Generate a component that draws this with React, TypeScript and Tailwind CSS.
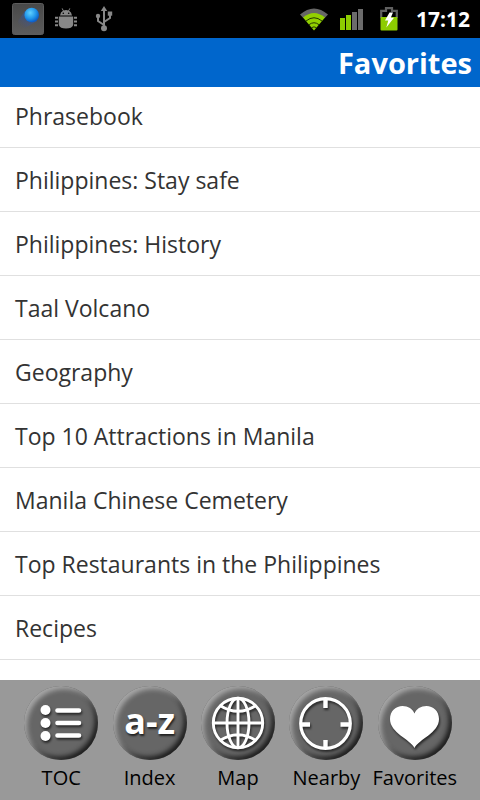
import type { ReactNode } from "react";

const favorites = [
  "Phrasebook",
  "Philippines: Stay safe",
  "Philippines: History",
  "Taal Volcano",
  "Geography",
  "Top 10 Attractions in Manila",
  "Manila Chinese Cemetery",
  "Top Restaurants in the Philippines",
  "Recipes",
];

function AppNotificationIcon() {
  return (
    <svg width="32" height="32" viewBox="0 0 32 32" aria-hidden="true">
      <defs>
        <radialGradient id="ball" cx="0.4" cy="0.35" r="0.65">
          <stop offset="0" stopColor="#5fd0ff" />
          <stop offset="0.6" stopColor="#2196ea" />
          <stop offset="1" stopColor="#0a5cc8" />
        </radialGradient>
        <linearGradient id="trail" x1="1" y1="0" x2="0" y2="1">
          <stop offset="0.3" stopColor="#2a5aa8" stopOpacity="0.8" />
          <stop offset="0.9" stopColor="#4a5080" stopOpacity="0" />
        </linearGradient>
        <linearGradient id="tile" x1="0" y1="0" x2="0" y2="1">
          <stop offset="0" stopColor="#484848" />
          <stop offset="1" stopColor="#5c5c5c" />
        </linearGradient>
      </defs>
      <rect x="0.5" y="0.5" width="31" height="31" rx="2" fill="url(#tile)" stroke="#5c5c5c" />
      <path d="M13 8 L6 18 Q5 26 13 25 L25 18 Z" fill="url(#trail)" />
      <circle cx="19.7" cy="12" r="7.3" fill="url(#ball)" />
    </svg>
  );
}

function DebugIcon() {
  return (
    <svg width="22" height="22" viewBox="0 0 22 22" fill="#888888" aria-hidden="true">
      <path d="M5 7.5 Q5.5 3.8 8 2.8 L6.6 0.6 L7.4 0.2 L8.8 2.4 Q11 1.8 13.2 2.4 L14.6 0.2 L15.4 0.6 L14 2.8 Q16.5 3.8 17 7.5 Z" />
      <path d="M3.8 8.5 H18.2 V17 Q17 20.5 11 20.5 Q5 20.5 3.8 17 Z" />
      <path d="M0 9.8 H3 M0 13.5 H3 M0 17.2 H3 M19 9.8 H22 M19 13.5 H22 M19 17.2 H22" fill="none" stroke="#888888" strokeWidth="2" />
      <circle cx="8.3" cy="5.2" r="0.8" fill="#000" />
      <circle cx="13.7" cy="5.2" r="0.8" fill="#000" />
    </svg>
  );
}

function UsbIcon() {
  return (
    <svg width="18" height="26" viewBox="0 0 18 26" aria-hidden="true">
      <g fill="none" stroke="#888888" strokeWidth="2">
        <path d="M9 4 V22 M9 19 L3 15 V11 M9 16 L15 12 V8" />
      </g>
      <path d="M9 0 L12.2 5 H5.8 Z" fill="#888888" />
      <circle cx="9" cy="22.3" r="3" fill="#888888" />
      <circle cx="3" cy="10" r="2.2" fill="#888888" />
      <rect x="12.8" y="5.5" width="4.4" height="4.2" fill="#888888" />
    </svg>
  );
}

function WifiIcon() {
  return (
    <svg width="30" height="23" viewBox="0 0 30 23" aria-hidden="true">
      <path d="M1 6.5 Q15 -5.5 29 6.5 L25.5 10.3 Q15 1.5 4.5 10.3 Z" fill="#666666" />
      <path d="M4 9.5 Q15 0.5 26 9.5 L15 22.5 Z" fill="#92d000" />
      <g fill="none" stroke="#253800" strokeWidth="1">
        <path d="M7 13 Q15 6.5 23 13" />
        <path d="M10 16.7 Q15 12.8 20 16.7" />
        <path d="M12.5 19.7 Q15 18 17.5 19.7" />
      </g>
    </svg>
  );
}

function SignalIcon() {
  return (
    <svg width="25" height="23" viewBox="0 0 25 23" aria-hidden="true">
      <rect x="1" y="10" width="5" height="12" fill="#8dcc00" />
      <rect x="7" y="7" width="5" height="15" fill="#8dcc00" />
      <rect x="13" y="4" width="5" height="18" fill="#6b6b6b" />
      <rect x="19" y="1" width="5" height="21" fill="#6b6b6b" />
    </svg>
  );
}

function BatteryIcon() {
  return (
    <svg width="18" height="24" viewBox="0 0 18 24" aria-hidden="true">
      <path d="M1.2 11 V3.8 H6 V1.2 H12 V3.8 H16.8 V11" fill="none" stroke="#606060" strokeWidth="2.2" />
      <rect x="0.5" y="10" width="17" height="13.5" rx="1" fill="#8dcc00" />
      <path d="M9.5 5.5 L13 5.5 L10.8 10.8 L14 10.8 L6.3 20.5 L8.3 13.5 L5 13.5 Z" fill="#ffffff" />
    </svg>
  );
}

function Disc({ children }: { children: ReactNode }) {
  return (
    <span className="flex h-[74px] w-[74px] items-center justify-center rounded-full bg-[#666666] shadow-[inset_3px_3px_5px_#a8a8a8,inset_-3px_-3px_5px_#1c1c1c]">
      {children}
    </span>
  );
}

function Glyph({ children }: { children: ReactNode }) {
  return (
    <svg
      className="drop-shadow-[1px_2px_1px_rgba(0,0,0,0.6)]"
      width="74"
      height="74"
      viewBox="0 0 74 74"
      fill="none"
      stroke="#ffffff"
      aria-hidden="true"
    >
      {children}
    </svg>
  );
}

const tabs: { label: string; icon: ReactNode }[] = [
  {
    label: "TOC",
    icon: (
      <Glyph>
        <g fill="#ffffff" stroke="none">
          <circle cx="21.5" cy="24" r="5" />
          <circle cx="21.5" cy="37" r="5" />
          <circle cx="21.5" cy="50" r="5" />
        </g>
        <path d="M33.5 24.5 H55 M33.5 37 H55 M33.5 49.5 H55" strokeWidth="4.6" strokeLinecap="round" />
      </Glyph>
    ),
  },
  {
    label: "Index",
    icon: (
      <span className="pb-1 text-4xl leading-8 font-bold text-white [text-shadow:1px_2px_2px_#222222]">
        a-z
      </span>
    ),
  },
  {
    label: "Map",
    icon: (
      <Glyph>
        <g strokeWidth="2.9">
          <circle cx="37" cy="37" r="24.7" />
          <ellipse cx="37" cy="37" rx="11" ry="24.7" />
          <path d="M37 12 V62 M12 37 H62 M19 19.5 Q37 31 55 19.5 M19 54.5 Q37 43 55 54.5" />
        </g>
      </Glyph>
    ),
  },
  {
    label: "Nearby",
    icon: (
      <Glyph>
        <circle cx="36.5" cy="37.5" r="24.8" strokeWidth="3.2" />
        <path d="M36.5 13 V22 M36.5 54 V62 M12 38.5 H21 M51.5 38.5 H61" strokeWidth="4.4" />
      </Glyph>
    ),
  },
  {
    label: "Favorites",
    icon: (
      <Glyph>
        <path
          d="M36.5 62 C32 53 12 47 12 33 C12 25 18 20 24.5 20 C30 20 35 23 36.5 27.5 C38 23 43 20 48.5 20 C55 20 61 25 61 33 C61 47 41 53 36.5 62 Z"
          fill="#ffffff"
          stroke="none"
        />
      </Glyph>
    ),
  },
];

export default function App() {
  return (
    <div className="flex min-h-screen flex-col bg-white font-['Open_Sans','Noto_Sans',sans-serif]">
      <div className="flex h-[38px] items-center bg-black pr-[10px] pl-3">
        <div className="flex items-center gap-[11px]">
          <AppNotificationIcon />
          <DebugIcon />
          <span className="pl-[7px]">
            <UsbIcon />
          </span>
        </div>
        <div className="ml-auto flex items-center">
          <WifiIcon />
          <span className="pl-[10px]">
            <SignalIcon />
          </span>
          <span className="pl-4">
            <BatteryIcon />
          </span>
          <time className="pl-[18px] text-[21px] leading-7 font-bold text-white">17:12</time>
        </div>
      </div>

      <header className="bg-[#0066cc] px-2 pt-[5px] pb-1 text-right">
        <h1 className="text-[29px] leading-10 font-bold text-white">Favorites</h1>
      </header>

      <main className="flex-1">
        <ul>
          {favorites.map((title) => (
            <li key={title} className="group border-b border-[#e0e0e0]">
              <a
                href="#"
                className="block px-[15px] pt-4 pb-[15px] text-[23px] leading-8 text-[#333333] group-first:pt-[13px]"
              >
                {title}
              </a>
            </li>
          ))}
        </ul>
      </main>

      <nav className="sticky bottom-0 flex h-[120px] bg-[#999999] pt-[6px] pr-[21px] pl-[17px]">
        {tabs.map((tab) => (
          <button key={tab.label} type="button" className="flex flex-1 basis-0 flex-col items-center">
            <Disc>{tab.icon}</Disc>
            <span className="pt-1 text-xl text-black">{tab.label}</span>
          </button>
        ))}
      </nav>
    </div>
  );
}
